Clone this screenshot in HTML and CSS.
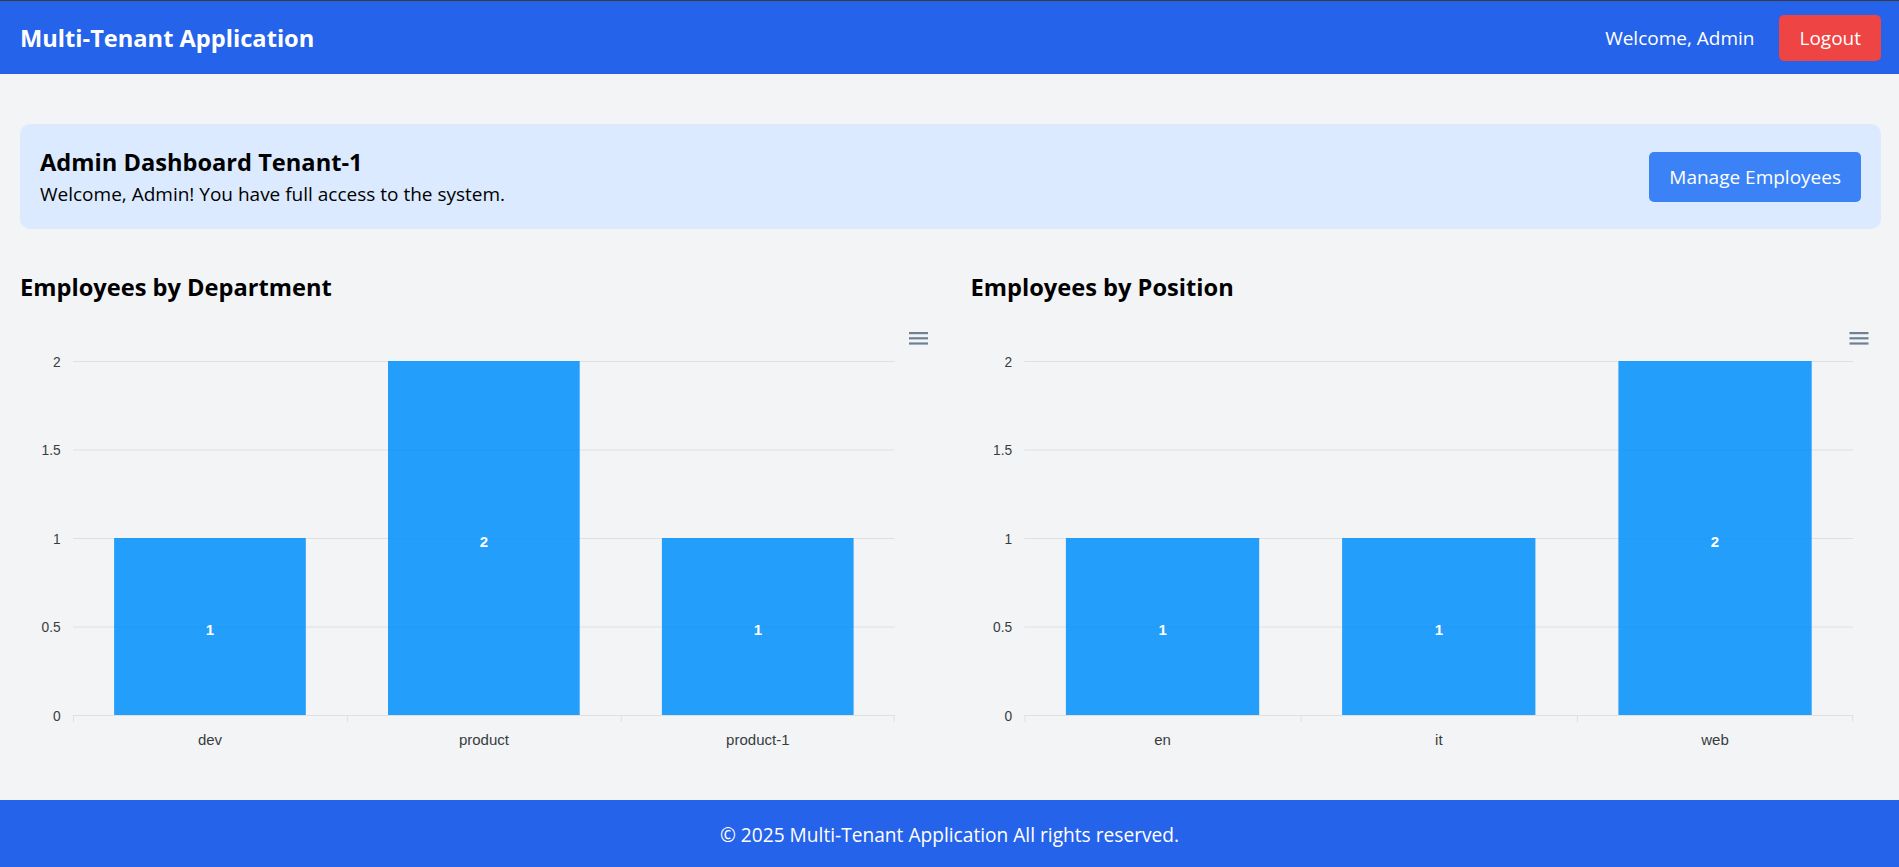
FILE: index.html
```html
<!DOCTYPE html>
<html lang="en">
<head>
<meta charset="utf-8">
<title>Multi-Tenant Application</title>
<link rel="stylesheet" href="styles.css">
</head>
<body>
<header class="navbar">
  <div class="brand">Multi-Tenant Application</div>
  <div class="nav-right">
    <span class="welcome">Welcome, Admin</span>
    <button class="btn btn-logout">Logout</button>
  </div>
</header>

<main class="main">
  <section class="hero">
    <div class="hero-text">
      <h1 class="hero-title">Admin Dashboard Tenant-1</h1>
      <p class="hero-sub">Welcome, Admin! You have full access to the system.</p>
    </div>
    <button class="btn btn-manage">Manage Employees</button>
  </section>

  <section class="charts">
    <div class="chart-col">
      <h2 class="chart-title">Employees by Department</h2>
      <svg class="chart" width="910" height="440" viewBox="0 0 910 440">
        <g class="menu">
          <rect x="889" y="8" width="19" height="2.2"/>
          <rect x="889" y="13.2" width="19" height="2.2"/>
          <rect x="889" y="18.4" width="19" height="2.2"/>
        </g>
        <g class="grid">
          <line x1="53" x2="874.7" y1="37.5" y2="37.5"/>
          <line x1="53" x2="874.7" y1="126" y2="126"/>
          <line x1="53" x2="874.7" y1="214.5" y2="214.5"/>
          <line x1="53" x2="874.7" y1="303" y2="303"/>
        </g>
        <g class="ylabels">
          <text x="40.7" y="42.5">2</text>
          <text x="40.7" y="131">1.5</text>
          <text x="40.7" y="219.5">1</text>
          <text x="40.7" y="308">0.5</text>
          <text x="40.7" y="396.5">0</text>
        </g>
        <g class="bars">
          <rect x="94.1" y="214" width="191.7" height="177"/>
          <rect x="368" y="37" width="191.7" height="354"/>
          <rect x="641.9" y="214" width="191.7" height="177"/>
        </g>
        <g class="axis">
          <line x1="53" x2="874.7" y1="391.5" y2="391.5"/>
          <line x1="53.5" x2="53.5" y1="391" y2="398"/>
          <line x1="327.4" x2="327.4" y1="391" y2="398"/>
          <line x1="601.3" x2="601.3" y1="391" y2="398"/>
          <line x1="874.2" x2="874.2" y1="391" y2="398"/>
        </g>
        <g class="dlabels">
          <text x="190" y="311.3">1</text>
          <text x="463.9" y="223">2</text>
          <text x="737.8" y="311.3">1</text>
        </g>
        <g class="xlabels">
          <text x="190" y="421">dev</text>
          <text x="463.9" y="421">product</text>
          <text x="737.8" y="421">product-1</text>
        </g>
      </svg>
    </div>

    <div class="chart-col">
      <h2 class="chart-title">Employees by Position</h2>
      <svg class="chart" width="910" height="440" viewBox="0 0 910 440">
        <g class="menu">
          <rect x="878.5" y="8" width="19" height="2.2"/>
          <rect x="878.5" y="13.2" width="19" height="2.2"/>
          <rect x="878.5" y="18.4" width="19" height="2.2"/>
        </g>
        <g class="grid">
          <line x1="53.5" x2="882.2" y1="37.5" y2="37.5"/>
          <line x1="53.5" x2="882.2" y1="126" y2="126"/>
          <line x1="53.5" x2="882.2" y1="214.5" y2="214.5"/>
          <line x1="53.5" x2="882.2" y1="303" y2="303"/>
        </g>
        <g class="ylabels">
          <text x="41.2" y="42.5">2</text>
          <text x="41.2" y="131">1.5</text>
          <text x="41.2" y="219.5">1</text>
          <text x="41.2" y="308">0.5</text>
          <text x="41.2" y="396.5">0</text>
        </g>
        <g class="bars">
          <rect x="94.9" y="214" width="193.3" height="177"/>
          <rect x="371.1" y="214" width="193.3" height="177"/>
          <rect x="647.4" y="37" width="193.3" height="354"/>
        </g>
        <g class="axis">
          <line x1="53.5" x2="882.2" y1="391.5" y2="391.5"/>
          <line x1="54" x2="54" y1="391" y2="398"/>
          <line x1="330.2" x2="330.2" y1="391" y2="398"/>
          <line x1="606.4" x2="606.4" y1="391" y2="398"/>
          <line x1="881.7" x2="881.7" y1="391" y2="398"/>
        </g>
        <g class="dlabels">
          <text x="191.6" y="311.3">1</text>
          <text x="467.8" y="311.3">1</text>
          <text x="744" y="223">2</text>
        </g>
        <g class="xlabels">
          <text x="191.6" y="421">en</text>
          <text x="467.8" y="421">it</text>
          <text x="744" y="421">web</text>
        </g>
      </svg>
    </div>
  </section>
</main>

<footer class="footer">
  <p>© 2025 Multi-Tenant Application All rights reserved.</p>
</footer>
</body>
</html>
```

FILE: styles.css
```css
* {
  box-sizing: border-box;
}

html, body {
  margin: 0;
  padding: 0;
}

body {
  min-height: 100vh;
  display: flex;
  flex-direction: column;
  background: #f3f4f6;
  font-family: "Open Sans", "Noto Sans", sans-serif;
  font-size: 19px;
  line-height: 30px;
  color: #000;
}

.navbar {
  height: 74px;
  border-top: 1px solid #3a3a3a;
  background: #2563eb;
  color: #fff;
  display: flex;
  align-items: center;
  justify-content: space-between;
  padding: 0 18px 0 20px;
  flex-shrink: 0;
}

.brand {
  font-size: 23.65px;
  font-weight: 700;
  line-height: 35px;
  padding-top: 1px;
}

.nav-right {
  display: flex;
  align-items: center;
  gap: 25px;
}

.welcome {
  font-size: 19px;
}

.btn {
  border: none;
  color: #fff;
  font-family: inherit;
  font-size: 19px;
  line-height: 30px;
  border-radius: 5px;
  cursor: pointer;
}

.btn-logout {
  background: #ef4444;
  height: 46px;
  padding: 0 20px;
}

.btn-manage {
  background: #3b82f6;
  padding: 10px 20px;
}

.main {
  flex: 1;
  padding: 50px 18px 0 20px;
}

.hero {
  background: #dbeafe;
  border-radius: 10px;
  padding: 20px;
  display: flex;
  align-items: center;
  justify-content: space-between;
}

.hero-title {
  margin: 0;
  font-size: 23.65px;
  font-weight: 700;
  line-height: 35px;
  padding-top: 1px;
  margin-bottom: -1px;
}

.hero-sub {
  margin: 0;
  font-size: 19px;
  line-height: 30px;
}

.charts {
  margin-top: 40px;
  display: grid;
  grid-template-columns: 1fr 1fr;
  gap: 40px;
}

.chart-col {
  min-width: 0;
}

.chart-title {
  margin: 0 0 19px;
  font-size: 23.65px;
  font-weight: 700;
  line-height: 35px;
  padding-top: 1px;
}

.chart {
  display: block;
  overflow: visible;
  font-family: "Liberation Sans", Arial, sans-serif;
}

.menu rect {
  fill: #6e8192;
}

.grid line,
.axis line {
  stroke: #e0e0e0;
  stroke-width: 1;
}

.bars rect {
  fill: #008ffb;
  fill-opacity: 0.86;
}

.ylabels text {
  font-size: 13.75px;
  fill: #373d3f;
  text-anchor: end;
}

.xlabels text {
  font-size: 15px;
  fill: #373d3f;
  text-anchor: middle;
}

.dlabels text {
  font-size: 15px;
  font-weight: 700;
  fill: #fff;
  text-anchor: middle;
}

.footer {
  height: 67px;
  background: #2563eb;
  color: #fff;
  display: flex;
  align-items: center;
  justify-content: center;
  flex-shrink: 0;
}

.footer p {
  margin: 0;
  font-size: 19.15px;
  line-height: 30px;
  padding-top: 2px;
}
```
